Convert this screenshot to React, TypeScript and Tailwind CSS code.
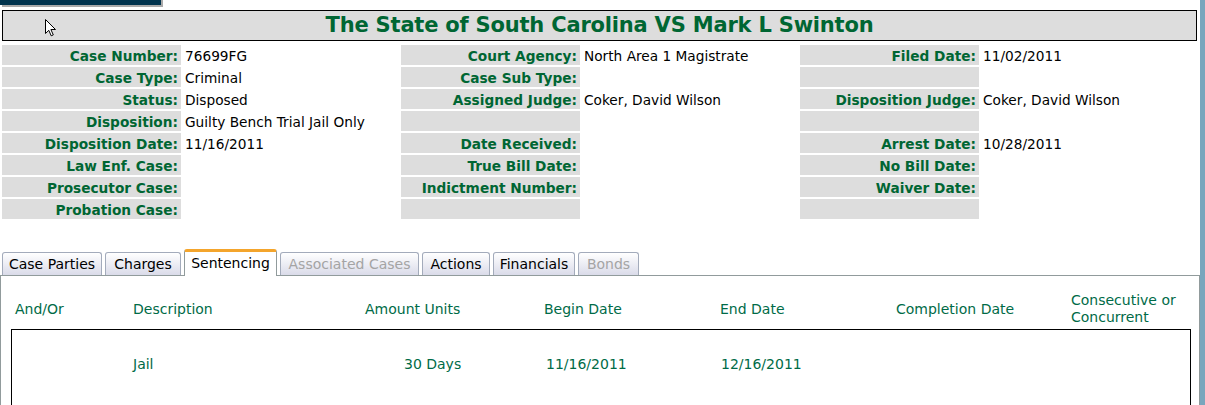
const fields: [string, string, string, string, string, string][] = [
  ["Case Number:", "76699FG", "Court Agency:", "North Area 1 Magistrate", "Filed Date:", "11/02/2011"],
  ["Case Type:", "Criminal", "Case Sub Type:", "", "", ""],
  ["Status:", "Disposed", "Assigned Judge:", "Coker, David Wilson", "Disposition Judge:", "Coker, David Wilson"],
  ["Disposition:", "Guilty Bench Trial Jail Only", "", "", "", ""],
  ["Disposition Date:", "11/16/2011", "Date Received:", "", "Arrest Date:", "10/28/2011"],
  ["Law Enf. Case:", "", "True Bill Date:", "", "No Bill Date:", ""],
  ["Prosecutor Case:", "", "Indictment Number:", "", "Waiver Date:", ""],
  ["Probation Case:", "", "", "", "", ""],
];

const tabs = [
  { label: "Case Parties", w: "w-[100px]" },
  { label: "Charges", w: "w-[76px]" },
  { label: "Sentencing", w: "w-[93px]", active: true },
  { label: "Associated Cases", w: "w-[139px]", disabled: true },
  { label: "Actions", w: "w-[68px]" },
  { label: "Financials", w: "w-[82px]" },
  { label: "Bonds", w: "w-[61px]", disabled: true },
];

const cols = "grid grid-cols-[118px_232px_179px_176px_176px_175px_128px]";

function Cursor() {
  return (
    <svg
      className="absolute left-[45px] top-[19px]"
      width="12"
      height="18"
      viewBox="0 0 12 18"
    >
      <path
        d="M0.5 0.5 L0.5 14.5 L3.8 11.3 L6.2 16.8 L8.3 15.9 L5.9 10.5 L10.5 10.5 Z"
        fill="#fff"
        stroke="#000"
        strokeWidth="1"
      />
    </svg>
  );
}

export default function App() {
  return (
    <div className="flex h-[405px] w-full overflow-hidden bg-[#79a6bd] font-['DejaVu_Sans',Verdana,sans-serif]">
      <div className="relative w-[1200px] shrink-0 bg-white">
        {/* page is scrolled: only the bottom of the Switch View button shows */}
        <div className="-mt-[21px] flex h-[26px] w-[161px] items-center justify-center bg-[#00334d] text-[13px] font-bold text-white shadow-[2px_2px_0_#a9a9a9]">
          Switch View
        </div>

        <div className="ml-[2px] mt-[5px] h-[31px] w-[1195px] border border-black bg-[#dddddd] text-center text-[21px] font-bold leading-[28px] tracking-[-0.2px] text-[#006633]">
          The State of South Carolina VS Mark L Swinton
        </div>

        <div className="mt-[2px] grid w-[1199px] grid-cols-[179px_216px_179px_216px_179px_216px] gap-[2px] px-[2px] pt-[2px] text-[13.7px] leading-[23px]">
          {fields.map((row, i) =>
            [0, 2, 4].map((c) => (
              <div key={`${i}-${c}`} className="contents">
                <div className="h-[20px] whitespace-nowrap bg-[#dddddd] pr-[3px] text-right font-bold text-[#006633]">
                  {row[c]}
                </div>
                <div className="h-[20px] whitespace-nowrap pl-[2px] text-black">{row[c + 1]}</div>
              </div>
            ))
          )}
        </div>

        <div className="mt-[31px] flex h-[26px] items-end gap-[3px] border-b border-[#919b9c] pl-[2px] text-[14px]">
          {tabs.map((t) =>
            t.active ? (
              <div
                key={t.label}
                className={`${t.w} -mb-px h-[27px] rounded-t-[3px] border-x border-t-[3px] border-x-[#919b9c] border-t-[#f4a52c] bg-white text-center leading-[22px] text-black`}
              >
                {t.label}
              </div>
            ) : (
              <div
                key={t.label}
                className={`${t.w} h-[23px] whitespace-nowrap rounded-t-[3px] border border-b-0 border-[#a3abbb] bg-gradient-to-b from-white to-[#dadbe9] text-center leading-[22px] ${t.disabled ? "text-[#a4a4a4]" : "text-black"}`}
              >
                {t.label}
              </div>
            )
          )}
        </div>

        <div className="h-[200px] border-x border-[#919b9c] pt-[16px] text-[14px] leading-[17px] text-[#006b47]">
          <div className={`${cols} items-center pl-[14px]`}>
            <div>And/Or</div>
            <div>Description</div>
            <div>Amount Units</div>
            <div>Begin Date</div>
            <div>End Date</div>
            <div>Completion Date</div>
            <div>Consecutive or Concurrent</div>
          </div>

          <div className="ml-[10px] mt-[3px] h-[120px] w-[1180px] border border-black pl-[3px] pt-[26px]">
            <div className={cols}>
              <div />
              <div>Jail</div>
              <div className="pl-[39px]">30 Days</div>
              <div className="pl-[2px]">11/16/2011</div>
              <div className="pl-[1px]">12/16/2011</div>
              <div />
              <div />
            </div>
          </div>
        </div>

        <Cursor />
      </div>
    </div>
  );
}
